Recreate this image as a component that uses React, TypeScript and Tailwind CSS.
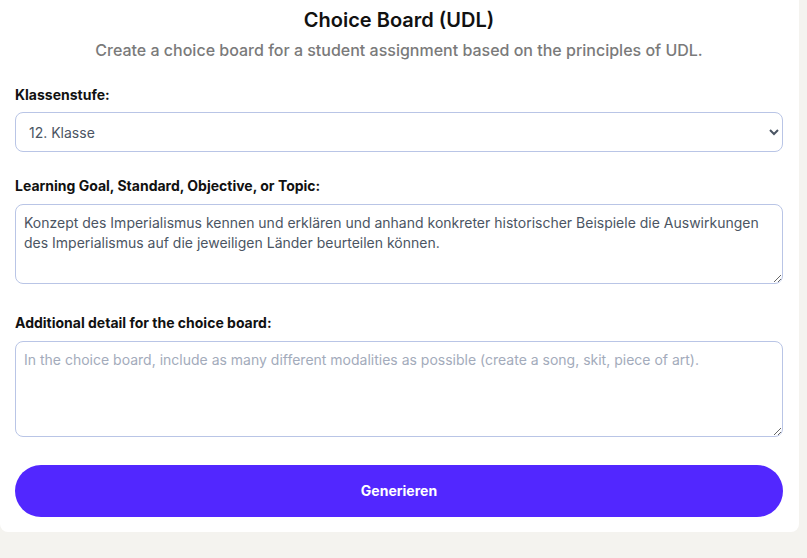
import React from "react";

const labelCls = "block text-sm font-bold text-[#111111] leading-5";
const fieldCls =
  "block w-full rounded-lg border border-[#b9c5e6] bg-white text-sm leading-5 text-[#4b5563] outline-none";

export default function App() {
  return (
    <div
      className="min-h-screen bg-[#f4f3ef] pr-2"
      style={{ fontFamily: "Inter, 'Noto Sans', sans-serif" }}
    >
      <div className="w-[799px] rounded-b-lg bg-white pl-[15px] pr-4 pt-[6px] pb-[15px]">
        <h1 className="text-center text-xl font-semibold leading-7 text-[#111111]">
          Choice Board (UDL)
        </h1>
        <p className="mt-1 text-center text-base font-medium leading-6 text-[#7a7a7a]">
          Create a choice board for a student assignment based on the principles of UDL.
        </p>

        <label className={`${labelCls} mt-[23px]`}>Klassenstufe:</label>
        <select
          defaultValue="12"
          className={`${fieldCls} mt-[7px] h-10 pl-[9px] pr-2 text-[#4b5563]`}
        >
          <option value="12">12. Klasse</option>
        </select>

        <label className={`${labelCls} mt-6`}>
          Learning Goal, Standard, Objective, or Topic:
        </label>
        <textarea
          className={`${fieldCls} mt-2 h-20 px-2 py-2`}
          defaultValue="Konzept des Imperialismus kennen und erklären und anhand konkreter historischer Beispiele die Auswirkungen des Imperialismus auf die jeweiligen Länder beurteilen können."
        />

        <label className={`${labelCls} mt-[29px]`}>
          Additional detail for the choice board:
        </label>
        <textarea
          className={`${fieldCls} mt-2 h-24 px-2 py-2 placeholder:text-[#a3abbb]`}
          placeholder="In the choice board, include as many different modalities as possible (create a song, skit, piece of art)."
        />

        <button className="mt-7 block h-[52px] w-full rounded-full bg-[#5227ff] text-sm font-bold text-white">
          Generieren
        </button>
      </div>
    </div>
  );
}
